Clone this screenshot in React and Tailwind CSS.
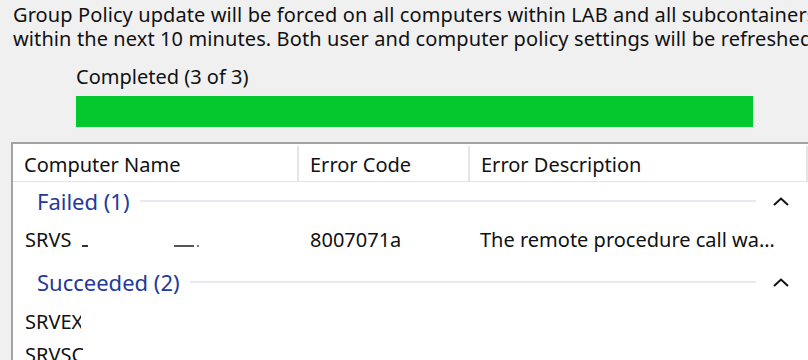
const COLUMNS = [
  { label: 'Computer Name', width: 'w-[286px]' },
  { label: 'Error Code', width: 'w-[171px]' },
  { label: 'Error Description', width: 'flex-1' },
];

function Chevron() {
  return (
    <svg width="18" height="10" viewBox="0 0 18 10" fill="none" className="shrink-0">
      <path d="M2 9L9 2.5L16 9" stroke="#111" strokeWidth="2" />
    </svg>
  );
}

function GroupRow({ label, className = '' }) {
  return (
    <div className={`flex items-center h-[38px] pl-[24px] pr-[18px] ${className}`}>
      <span className="text-[#24399a] text-[22px]">{label}</span>
      <div className="flex-1 h-[2px] bg-[#e6e9f1] ml-[10px] mr-[16px]" />
      <Chevron />
    </div>
  );
}

export default function App() {
  return (
    <div
      className="w-[808px] h-[360px] overflow-hidden bg-[#f0f0f0] text-[#111] text-[20px] leading-[24px]"
      style={{ fontFamily: '"Noto Sans", "Open Sans", sans-serif' }}
    >
      <p className="pl-[13px] pt-[3px] whitespace-nowrap tracking-[0.1px]">
        Group Policy update will be forced on all computers within LAB and all subcontainers
        <br />
        within the next 10 minutes. Both user and computer policy settings will be refreshed.
      </p>

      <div className="ml-[76px] mt-[14px]">Completed (3 of 3)</div>
      <div className="ml-[76px] mt-[7px] w-[677px] h-[31px] bg-[#04c92e]" />

      <div className="ml-[11px] mt-[15px] border-t-2 border-l-2 border-[#a3a3a3] bg-white h-[300px]">
        {/* header */}
        <div className="flex h-[36px] border-b border-[#e3e3e3] mt-[2px]">
          {COLUMNS.map((col) => (
            <div
              key={col.label}
              className={`${col.width} flex items-center pl-[11px] pt-[3px] border-r-2 border-[#e5e5e5] whitespace-nowrap`}
            >
              {col.label}
            </div>
          ))}
        </div>

        <GroupRow label="Failed (1)" />
        <div className="flex items-center h-[32px] mt-[4px] whitespace-nowrap">
          <div className="w-[286px] pl-[12px] flex items-end">
            <span>SRVS</span>
            <span className="ml-[11px] mb-[5px] w-[6px] h-[2px] bg-[#333]" />
            <span className="ml-[86px] mb-[5px] w-[20px] h-[2px] bg-[#555]" />
            <span className="ml-[3px] mb-[5px] w-[2px] h-[2px] bg-[#777]" />
          </div>
          <div className="w-[171px] pl-[11px]">8007071a</div>
          <div className="flex-1 pl-[10px]">The remote procedure call wa…</div>
        </div>

        <GroupRow label="Succeeded (2)" className="mt-[7px]" />
        <div className="flex items-center h-[32px] mt-[5px] pl-[12px]">
          <span className="w-[56px] overflow-hidden whitespace-nowrap">SRVEX</span>
        </div>
        <div className="flex items-center h-[32px] mt-[1px] pl-[12px]">
          <span className="w-[58px] overflow-hidden whitespace-nowrap">SRVSC</span>
        </div>
      </div>
    </div>
  );
}
